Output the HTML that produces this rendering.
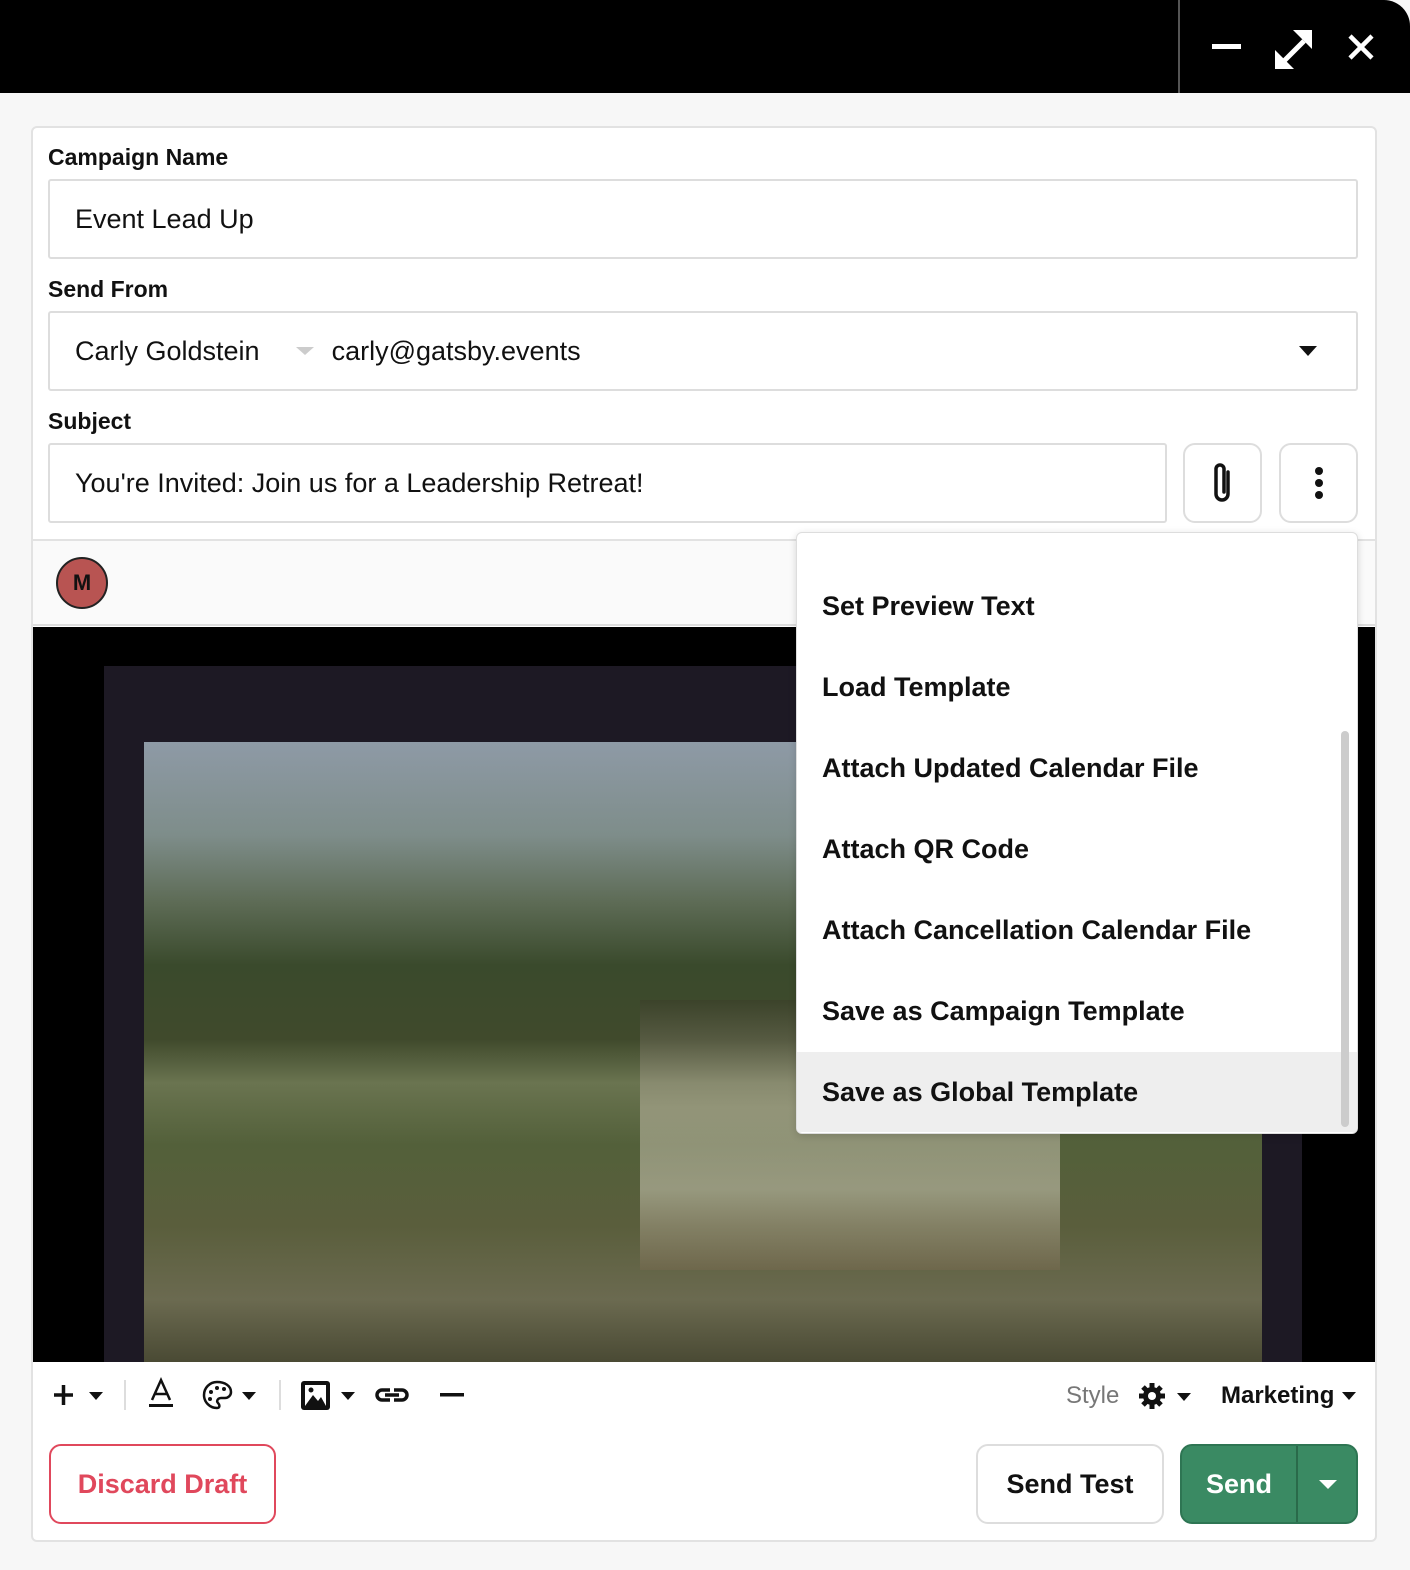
<!DOCTYPE html>
<html><head><style>
*{box-sizing:border-box;margin:0;padding:0}
body{width:1410px;height:1570px;background:#f7f7f7;font-family:"Liberation Sans",Roboto,sans-serif;position:relative;overflow:hidden;color:#111}
.abs{position:absolute}
.top{left:0;top:0;width:1410px;height:93px;background:#000;border-top-right-radius:26px}
.panel{left:31px;top:126px;width:1346px;height:1416px;background:#fff;border:2px solid #e2e2e2;border-radius:6px}
.lbl{font-weight:bold;font-size:23px;color:#111}
.inp{border:2px solid #ddd;border-radius:3px;background:#fff;font-size:27px;padding-left:25px;display:flex;align-items:center}
.btn{border:2px solid #ddd;border-radius:12px;background:#fff;display:flex;align-items:center;justify-content:center}
.menu{left:796px;top:532px;width:562px;height:602px;background:#fff;border:1px solid #ddd;border-radius:6px;box-shadow:0 2px 8px rgba(0,0,0,.15);overflow:hidden}
.mi{position:absolute;left:0;width:545px;height:80px;padding-left:25px;display:flex;align-items:center;font-weight:bold;font-size:27px;color:#111}
</style></head><body>
<div class="abs top"></div>
<div class="abs" style="left:1178px;top:0;width:2px;height:93px;background:#555"></div>
<svg class="abs" style="left:1200px;top:25px" width="190" height="45">
<rect x="12" y="19" width="29" height="5" fill="#fff"/>
<path d="M80 40 L104 16" stroke="#fff" stroke-width="5"/>
<path d="M112 5 L112 24 L93 5Z" fill="#fff"/>
<path d="M75 25 L75 44 L94 44Z" fill="#fff"/>
<path d="M150 11 L172 33 M172 11 L150 33" stroke="#fff" stroke-width="4.5"/>
</svg>
<div class="abs panel"></div>
<div class="abs lbl" style="left:48px;top:144px">Campaign Name</div>
<div class="abs inp" style="left:48px;top:179px;width:1310px;height:80px">Event Lead Up</div>
<div class="abs lbl" style="left:48px;top:276px">Send From</div>
<div class="abs inp" style="left:48px;top:311px;width:1310px;height:80px">Carly Goldstein<span style="display:inline-block;margin:0 18px 0 36px;border:9px solid transparent;border-top:8px solid #ccc;border-bottom:0;width:0"></span>carly@gatsby.events</div>
<div class="abs" style="left:1299px;top:346px;border:9px solid transparent;border-top:10px solid #111;border-bottom:0;width:0"></div>
<div class="abs lbl" style="left:48px;top:408px">Subject</div>
<div class="abs inp" style="left:48px;top:443px;width:1119px;height:80px">You're Invited: Join us for a Leadership Retreat!</div>
<div class="abs btn" style="left:1183px;top:443px;width:79px;height:80px"><svg width="30" height="46" viewBox="0 0 30 46"><path d="M20 12 V34 a6 6 0 0 1 -12 0 V9 a4 4 0 0 1 8 0 V32" fill="none" stroke="#111" stroke-width="3.5" stroke-linecap="round"/></svg></div>
<div class="abs btn" style="left:1279px;top:443px;width:79px;height:80px"><svg width="10" height="34"><circle cx="5" cy="5" r="4" fill="#111"/><circle cx="5" cy="17" r="4" fill="#111"/><circle cx="5" cy="29" r="4" fill="#111"/></svg></div>
<div class="abs" style="left:33px;top:539px;width:1342px;height:2px;background:#e2e2e2"></div>
<div class="abs" style="left:33px;top:541px;width:1342px;height:85px;background:#fafafa;border-bottom:2px solid #ddd"></div>
<div class="abs" style="left:56px;top:557px;width:52px;height:52px;border-radius:50%;background:#b85452;border:2px solid #222;color:#111;font-weight:bold;font-size:22px;display:flex;align-items:center;justify-content:center">M</div>
<div class="abs" style="left:33px;top:627px;width:1342px;height:735px;background:#000"></div>
<div class="abs" style="left:104px;top:666px;width:1198px;height:696px;background:#1d1924"></div>
<div class="abs" style="left:144px;top:742px;width:1118px;height:620px;background:linear-gradient(180deg,#8e9aa6 0%,#7e8d8a 15%,#5d6b55 26%,#3a4a2c 36%,#404a2c 48%,#6a7450 55%,#53603a 65%,#5a5e3c 78%,#6b6a50 90%,#4a4a34 100%)"></div>
<div class="abs" style="left:640px;top:1000px;width:420px;height:270px;background:linear-gradient(180deg,#3a3a28 0%,#cfc6b4 40%,#e6dfd0 70%,#7a6a50 100%);opacity:.45"></div>
<div class="abs menu">
<div class="mi" style="top:-50px">DSO Teammates</div>
<div class="mi" style="top:33px">Set Preview Text</div>
<div class="mi" style="top:114px">Load Template</div>
<div class="mi" style="top:195px">Attach Updated Calendar File</div>
<div class="mi" style="top:276px">Attach QR Code</div>
<div class="mi" style="top:357px">Attach Cancellation Calendar File</div>
<div class="mi" style="top:438px">Save as Campaign Template</div>
<div class="mi" style="top:519px;background:#eee;width:560px">Save as Global Template</div>
<div class="abs" style="left:544px;top:198px;width:8px;height:396px;border-radius:4px;background:#ccc"></div>
</div>
<svg class="abs" style="left:45px;top:1375px" width="430" height="40">
<path d="M9 20 H28 M18.5 10 V30" stroke="#111" stroke-width="3.5"/>
<path d="M44 17 H58 L51 25Z" fill="#111"/>
<rect x="79" y="5" width="2" height="30" fill="#ddd"/>
<path d="M107 25 L116 5 L125 25 M110 19 H122" fill="none" stroke="#111" stroke-width="2.5"/>
<rect x="104" y="29" width="24" height="3" fill="#111"/>
<path d="M172 7 a12 12 0 1 0 0 26 c3 0 3-3 1-5 c-2-2 0-5 3-5 h4 a6 6 0 0 0 6-6 c0-6-6-10-14-10Z" fill="none" stroke="#111" stroke-width="2.5"/>
<circle cx="166" cy="17" r="2" fill="#111"/><circle cx="172" cy="13" r="2" fill="#111"/><circle cx="179" cy="14" r="2" fill="#111"/><circle cx="165" cy="24" r="2" fill="#111"/>
<path d="M197 17 H211 L204 25Z" fill="#111"/>
<rect x="234" y="5" width="2" height="30" fill="#ddd"/>
<rect x="256" y="6" width="29" height="29" rx="3" fill="#111"/>
<rect x="260" y="10" width="21" height="21" fill="#fff"/>
<path d="M260 31 L268 20 L273 26 L276 22 L281 31Z" fill="#111"/><circle cx="266" cy="15" r="2.5" fill="#111"/>
<path d="M296 17 H310 L303 25Z" fill="#111"/>
<path d="M345 15 h-8 a5 5 0 0 0 0 10 h8 M349 15 h8 a5 5 0 0 1 0 10 h-8 M340 20 h14" fill="none" stroke="#111" stroke-width="3.5"/>
<rect x="395" y="18" width="24" height="3.5" fill="#111"/>
</svg>
<div class="abs" style="left:1066px;top:1382px;font-size:24px;color:#777">Style</div>
<svg class="abs" style="left:1137px;top:1381px" width="60" height="30"><circle cx="15" cy="15" r="9" fill="#111"/><path d="M15 2 V28 M2 15 H28 M6 6 L24 24 M24 6 L6 24" stroke="#111" stroke-width="5"/><circle cx="15" cy="15" r="4" fill="#fff"/><path d="M40 12 H54 L47 20Z" fill="#111"/></svg>
<div class="abs" style="left:1221px;top:1382px;font-size:24px;font-weight:bold">Marketing</div>
<svg class="abs" style="left:1340px;top:1389px" width="20" height="14"><path d="M2 3 H16 L9 11Z" fill="#111"/></svg>
<div class="abs btn" style="left:49px;top:1444px;width:227px;height:80px;border-color:#e0485c;color:#e0485c;font-weight:bold;font-size:27px">Discard Draft</div>
<div class="abs btn" style="left:976px;top:1444px;width:188px;height:80px;font-weight:bold;font-size:27px">Send Test</div>
<div class="abs" style="left:1180px;top:1444px;width:178px;height:80px;background:#3a8a63;border:2px solid #2e7553;border-radius:12px;color:#fff;font-weight:bold;font-size:27px">
<div class="abs" style="left:0;top:0;width:114px;height:76px;display:flex;align-items:center;justify-content:center">Send</div>
<div class="abs" style="left:114px;top:0;width:2px;height:76px;background:#2a6a4a"></div>
<svg class="abs" style="left:136px;top:33px" width="20" height="12"><path d="M1 1 H19 L10 10Z" fill="#fff"/></svg>
</div>
</body></html>
